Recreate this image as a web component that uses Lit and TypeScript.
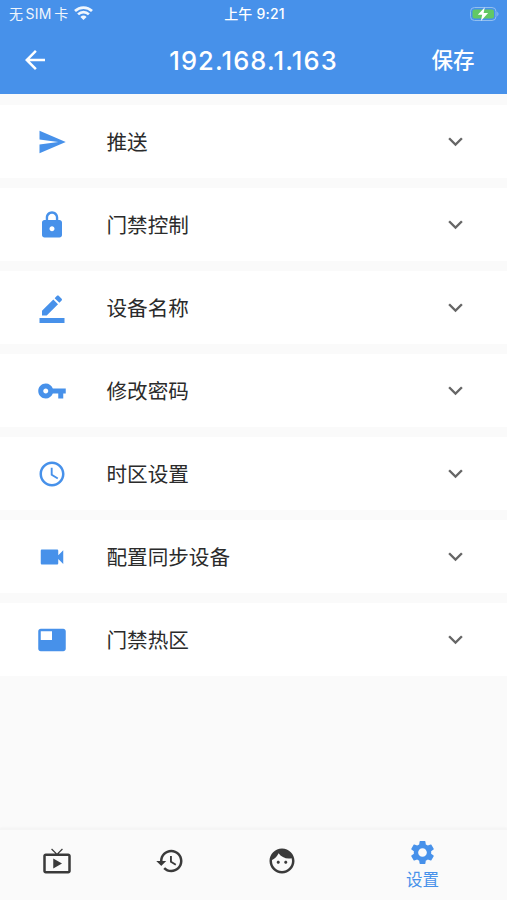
import { LitElement, html, css, svg } from "lit";
import { customElement, property } from "lit/decorators.js";

const ICONS: Record<string, string> = {
  back: "M20 11H7.83l5.59-5.59L12 4l-8 8 8 8 1.41-1.41L7.83 13H20v-2z",
  send: "M2.01 21L23 12 2.01 3 2 10l15 2-15 2z",
  lock: "M18 8h-1V6c0-2.76-2.24-5-5-5S7 3.24 7 6v2H6c-1.1 0-2 .9-2 2v10c0 1.1.9 2 2 2h12c1.1 0 2-.9 2-2V10c0-1.1-.9-2-2-2zm-6 9c-1.1 0-2-.9-2-2s.9-2 2-2 2 .9 2 2-.9 2-2 2zm3.1-9H8.9V6c0-1.71 1.39-3.1 3.1-3.1 1.71 0 3.1 1.39 3.1 3.1v2z",
  rename: "M22 24H2v-4h20v4zM13.06 5.19l3.75 3.75L7.75 18H4v-3.75l9.06-9.06zm4.82 2.68l-3.75-3.75 1.83-1.83c.39-.39 1.02-.39 1.41 0l2.34 2.34c.39.39.39 1.02 0 1.41l-1.83 1.83z",
  key: "M12.65 10C11.83 7.67 9.61 6 7 6c-3.31 0-6 2.69-6 6s2.69 6 6 6c2.61 0 4.83-1.67 5.65-4H17v4h4v-4h2v-4H12.65zM7 14c-1.1 0-2-.9-2-2s.9-2 2-2 2 .9 2 2-.9 2-2 2z",
  clock: "M11.99 2C6.47 2 2 6.48 2 12s4.47 10 9.99 10C17.52 22 22 17.52 22 12S17.52 2 11.99 2zM12 20c-4.42 0-8-3.58-8-8s3.58-8 8-8 8 3.58 8 8-3.58 8-8 8zm.5-13H11v6l5.25 3.15.75-1.23-4.5-2.67z",
  camera: "M17 10.5V7c0-.55-.45-1-1-1H4c-.55 0-1 .45-1 1v10c0 .55.45 1 1 1h12c.55 0 1-.45 1-1v-3.5l4 4v-11l-4 4z",
  zone: "M21 3H3c-1.1 0-2 .9-2 2v14c0 1.1.9 2 2 2h18c1.1 0 2-.9 2-2V5c0-1.1-.9-2-2-2zm-9 9H3V5h9v7z",
  expand: "M16.59 8.59L12 13.17 7.41 8.59 6 10l6 6 6-6z",
  tv: "M21 6h-7.59l3.29-3.29L16 2l-4 4-4-4-.7.71L10.59 6H3c-1.1 0-2 .89-2 2v12c0 1.1.9 2 2 2h18c1.1 0 2-.9 2-2V8c0-1.11-.9-2-2-2zm0 14H3V8h18v12zM9 10v8l7-4z",
  history: "M13 3c-4.97 0-9 4.03-9 9H1l3.89 3.89.07.14L9 12H6c0-3.87 3.13-7 7-7s7 3.13 7 7-3.13 7-7 7c-1.93 0-3.68-.79-4.94-2.06l-1.42 1.42C8.27 19.99 10.51 21 13 21c4.97 0 9-4.03 9-9s-4.03-9-9-9zm-1 5v5l4.28 2.54.72-1.21-3.5-2.08V8H12z",
  face: "M9 11.75c-.69 0-1.25.56-1.25 1.25s.56 1.25 1.25 1.25 1.25-.56 1.25-1.25-.56-1.25-1.25-1.25zm6 0c-.69 0-1.25.56-1.25 1.25s.56 1.25 1.25 1.25 1.25-.56 1.25-1.25-.56-1.25-1.25-1.25zM12 2C6.48 2 2 6.48 2 12s4.48 10 10 10 10-4.48 10-10S17.52 2 12 2zm0 18c-4.41 0-8-3.59-8-8 0-.29.02-.58.05-.86 2.36-1.05 4.23-2.98 5.21-5.37C11.07 8.33 14.05 10 17.42 10c.78 0 1.53-.09 2.25-.26.21.71.33 1.47.33 2.26 0 4.41-3.59 8-8 8z",
  gear: "M19.14 12.94c.04-.3.06-.61.06-.94 0-.32-.02-.64-.07-.94l2.03-1.58c.18-.14.23-.41.12-.61l-1.92-3.32c-.12-.22-.37-.29-.59-.22l-2.39.96c-.5-.38-1.03-.7-1.62-.94l-.36-2.54c-.04-.24-.24-.41-.48-.41h-3.84c-.24 0-.43.17-.47.41l-.36 2.54c-.59.24-1.13.57-1.62.94l-2.39-.96c-.22-.08-.47 0-.59.22L2.74 8.87c-.12.21-.08.47.12.61l2.03 1.58c-.05.3-.09.63-.09.94s.02.64.07.94l-2.03 1.58c-.18.14-.23.41-.12.61l1.92 3.32c.12.22.37.29.59.22l2.39-.96c.5.38 1.03.7 1.62.94l.36 2.54c.05.24.24.41.48.41h3.84c.24 0 .44-.17.47-.41l.36-2.54c.59-.24 1.13-.56 1.62-.94l2.39.96c.22.08.47 0 .59-.22l1.92-3.32c.12-.22.07-.47-.12-.61l-2.01-1.58zM12 15.6c-1.98 0-3.6-1.62-3.6-3.6s1.62-3.6 3.6-3.6 3.6 1.62 3.6 3.6-1.62 3.6-3.6 3.6z",
};

@customElement("md-icon")
class MdIcon extends LitElement {
  @property() name = "";
  static styles = css`
    :host { display: block; width: 30px; height: 30px; flex: none; }
    .glyph { display: block; width: 100%; height: 100%; fill: currentColor; }
  `;
  render() {
    return html`<svg class="glyph" viewBox="0 0 24 24">${svg`<path d=${ICONS[this.name]}></path>`}</svg>`;
  }
}

@customElement("setting-row")
class SettingRow extends LitElement {
  @property() icon = "";
  @property() label = "";
  static styles = css`
    :host {
      display: flex; align-items: center; height: 73px; box-sizing: border-box;
      padding: 0 37px; background: #fff;
    }
    .lead { color: #4791ea; }
    .label { flex: 1; margin-left: 39.5px; padding-top: 2px; font-size: 20.6px; line-height: 30px; color: #2b2b2b; }
    .chevron { width: 29px; height: 29px; color: #666; }
  `;
  render() {
    return html`
      <md-icon class="lead" name=${this.icon}></md-icon>
      <span class="label">${this.label}</span>
      <md-icon class="chevron" name="expand"></md-icon>
    `;
  }
}

@customElement("app-root")
class AppRoot extends LitElement {
  static styles = css`
    :host {
      display: flex; flex-direction: column; width: 507px; height: 900px; overflow: hidden;
      background: #fafafa; font-family: Inter, "Noto Sans CJK SC", sans-serif;
    }
    .top { height: 94px; flex: none; background: #4791ea; color: #fff; }
    .status {
      display: grid; grid-template-columns: 1fr auto 1fr; align-items: center;
      height: 27px; padding: 0 7px 0 9px; font-size: 14px; line-height: 20px;
    }
    .carrier { display: flex; align-items: center; gap: 2.5px; opacity: .92; }
    .sim { letter-spacing: .3px; }
    .wifi { width: 19px; height: 14px; margin-left: 3px; margin-bottom: 1px; }
    .time { font-weight: 500; letter-spacing: .2px; }
    .battery { justify-self: end; width: 31px; height: 16px; }
    .bar { display: grid; grid-template-columns: 1fr auto 1fr; align-items: center; height: 66px; padding: 0 20px; }
    .back { width: 30px; height: 30px; }
    .title { font-size: 25.5px; line-height: 30px; font-weight: 500; letter-spacing: 1.1px; padding-top: 1px; }
    .save { justify-self: end; margin-right: 12.5px; font-size: 21.5px; line-height: 30px; font-weight: 500; }
    .list { flex: 1; display: flex; flex-direction: column; gap: 10px; padding-top: 11px; }
    .nav {
      height: 71px; flex: none; display: grid; grid-template-columns: 113px 113px 112px 169px;
      align-items: center; color: #3a3a3a; border-top: 1px solid #f5f5f5;
      box-shadow: 0 -1px 2px #f2f2f2; box-sizing: border-box;
    }
    .tab { display: flex; flex-direction: column; align-items: center; padding-bottom: 8px; }
    .active { color: #4791ea; font-size: 16.5px; line-height: 24px; padding: 0; }
    .gear { width: 29px; height: 29px; margin-bottom: 1px; }
  `;
  render() {
    const rows = [
      ["send", "推送"], ["lock", "门禁控制"], ["rename", "设备名称"], ["key", "修改密码"],
      ["clock", "时区设置"], ["camera", "配置同步设备"], ["zone", "门禁热区"],
    ];
    return html`
      <header class="top">
        <div class="status">
          <div class="carrier">
            <span>无</span><span class="sim">SIM</span><span>卡</span>
            <svg class="wifi" viewBox="0 0 19 14" fill="none" stroke="#fff" stroke-width="2.7">
              <path d="M1 5a12.2 12.2 0 0 1 17 0M4.1 8.4a7.7 7.7 0 0 1 10.8 0"></path>
              <path d="M6.4 10.9a4.4 4.4 0 0 1 6.2 0L9.5 14z" fill="#fff" stroke="none"></path>
            </svg>
          </div>
          <div class="time">上午 9:21</div>
          <svg class="battery" viewBox="0 0 31 16">
            <rect x="1.5" y="1.5" width="25.5" height="13" rx="4" fill="none" stroke="#92bff0"></rect>
            <rect x="3.5" y="3.5" width="21.5" height="9" rx="2" fill="#62c865"></rect>
            <path d="M28.3 5.5q2.4 2.5 0 5z" fill="#92bff0"></path>
            <path d="M15.8 1.2L8.8 8.8h4.4l-1.3 6.1 7.2-7.9h-4.5z" fill="#fff"></path>
          </svg>
        </div>
        <div class="bar">
          <md-icon class="back" name="back"></md-icon>
          <div class="title">192.168.1.163</div>
          <div class="save">保存</div>
        </div>
      </header>
      <main class="list">
        ${rows.map(([icon, label]) => html`<setting-row icon=${icon} label=${label}></setting-row>`)}
      </main>
      <nav class="nav">
        <div class="tab"><md-icon name="tv"></md-icon></div>
        <div class="tab"><md-icon name="history"></md-icon></div>
        <div class="tab"><md-icon name="face"></md-icon></div>
        <div class="tab active"><md-icon class="gear" name="gear"></md-icon><span>设置</span></div>
      </nav>
    `;
  }
}
